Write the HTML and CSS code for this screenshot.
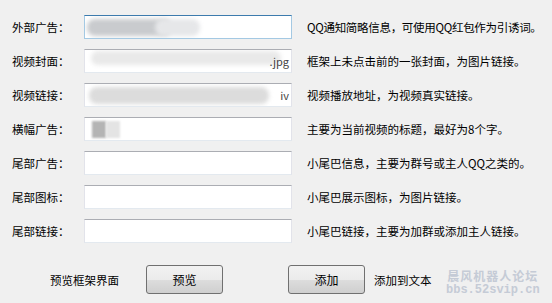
FILE: index.html
```html
<!DOCTYPE html>
<html lang="zh-CN">
<head>
    <meta charset="UTF-8">
    <title>视频框架</title>
    <link rel="stylesheet" href="styles.css">
</head>
<body>
    <div class="form">
        <div class="row">
            <label class="name">外部广告：</label>
            <div class="box focus">
                <span class="smear s1"></span>
                <span class="smear s1b"></span>
            </div>
            <span class="tip tight">QQ通知简略信息，可使用QQ红包作为引诱词。</span>
        </div>
        <div class="row">
            <label class="name">视频封面：</label>
            <div class="box">
                <span class="smear s2"></span>
                <span class="tail">.jpg</span>
            </div>
            <span class="tip">框架上未点击前的一张封面，为图片链接。</span>
        </div>
        <div class="row">
            <label class="name">视频链接：</label>
            <div class="box">
                <span class="smear s3"></span>
                <span class="tail">iv</span>
            </div>
            <span class="tip">视频播放地址，为视频真实链接。</span>
        </div>
        <div class="row">
            <label class="name">横幅广告：</label>
            <div class="box">
                <span class="smear s4"></span>
                <span class="smear s4b"></span>
            </div>
            <span class="tip">主要为当前视频的标题，最好为8个字。</span>
        </div>
        <div class="row">
            <label class="name">尾部广告：</label>
            <div class="box"></div>
            <span class="tip">小尾巴信息，主要为群号或主人QQ之类的。</span>
        </div>
        <div class="row">
            <label class="name">尾部图标：</label>
            <div class="box"></div>
            <span class="tip">小尾巴展示图标，为图片链接。</span>
        </div>
        <div class="row">
            <label class="name">尾部链接：</label>
            <div class="box"></div>
            <span class="tip">小尾巴链接，主要为加群或添加主人链接。</span>
        </div>
    </div>

    <div class="actions">
        <span class="hint hint-left">预览框架界面</span>
        <button class="btn">预览</button>
        <button class="btn btn-add">添加</button>
        <span class="hint">添加到文本</span>
    </div>

    <div class="mark">
        <div class="mark-cn">晨风机器人论坛</div>
        <div class="mark-en">bbs.52svip.cn</div>
    </div>
</body>
</html>
```

FILE: styles.css
```css
body {
    margin: 0;
    background: #f0f0f0;
    color: #000;
    font-family: "Noto Sans CJK SC", "Liberation Sans", sans-serif;
    font-size: 11.5px;
    width: 552px;
    height: 303px;
    overflow: hidden;
    position: relative;
}
.form {
    padding: 15px 0 0 12px;
    display: flex;
    flex-direction: column;
    gap: 10px;
}
.row {
    display: flex;
    align-items: center;
    height: 24px;
}
.name {
    flex: none;
    width: 72px;
    line-height: 24px;
}
.box {
    flex: none;
    width: 208px;
    height: 24px;
    box-sizing: border-box;
    background: #fff;
    border: 1px solid #e2e3ea;
    border-top-color: #abadb3;
    border-bottom-color: #e3e9ef;
    position: relative;
    overflow: hidden;
}
.box.focus {
    border-color: #a4c9e3;
    border-top-color: #3d7bad;
}
.tip {
    flex: none;
    margin-left: 15px;
    white-space: nowrap;
}
.tip.tight {
    letter-spacing: -0.3px;
}

/* blurred field contents */
.smear {
    position: absolute;
    top: 3px;
    height: 17px;
    border-radius: 8px;
    filter: blur(2px);
}
.s1 { left: 2px; width: 85px; background: #c9cbce; }
.s1b { left: 70px; width: 45px; background: #e6e7e9; }
.s2 { left: 6px; width: 190px; top: 1px; height: 14px; background: #e9e9e9; }
.s3 { left: 4px; width: 180px; background: #dcdcdc; }
.s4 { left: 7px; width: 14px; background: #b4b4b4; filter: blur(1px); border-radius: 0; }
.s4b { left: 21px; width: 14px; background: #e4e4e4; filter: blur(1px); border-radius: 0; }
.tail {
    position: absolute;
    right: 2px;
    top: 4px;
    font-size: 11px;
    line-height: 14px;
    color: #444;
}

.actions {
    display: flex;
    align-items: center;
    margin-top: 22px;
    height: 29px;
}
.hint-left {
    margin-left: 50px;
    margin-right: 27px;
}
.btn {
    width: 77px;
    height: 29px;
    border: 1px solid #707070;
    border-radius: 3px;
    background: linear-gradient(#f2f2f2, #ebebeb 50%, #dddddd 51%, #cfcfcf);
    font-family: inherit;
    font-size: 12px;
    color: #000;
    padding: 0;
}
.btn-add {
    margin-left: 65px;
    margin-right: 9px;
}

.mark {
    position: absolute;
    left: 446px;
    top: 269px;
    color: #c5cbd6;
    text-align: center;
    font-weight: bold;
}
.mark-cn {
    font-family: "Noto Sans CJK SC", serif;
    font-size: 12px;
    line-height: 13px;
    letter-spacing: 1px;
}
.mark-en {
    margin-top: 2px;
    font-family: "Liberation Mono", monospace;
    font-size: 12px;
    line-height: 12px;
}
```
